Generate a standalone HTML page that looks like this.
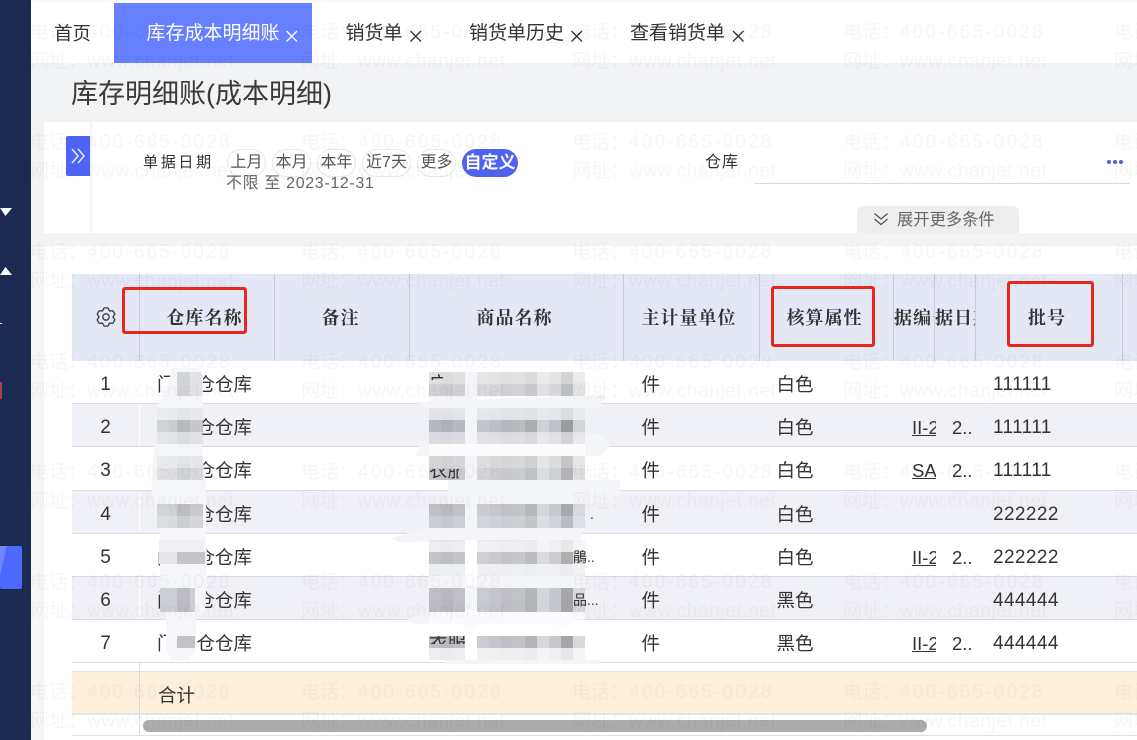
<!DOCTYPE html>
<html lang="zh-CN">
<head>
<meta charset="utf-8">
<title>库存明细账</title>
<style>
html,body{margin:0;padding:0;width:1137px;height:740px;overflow:hidden;background:#fff}
body{position:relative;font-family:"Liberation Sans","Noto Sans CJK SC",sans-serif;color:#333}
div,span,a{position:absolute;white-space:nowrap;display:block}
.tab{top:20px;font-size:19px;line-height:28px;color:#333}
.chip{top:149px;height:26px;line-height:25px;border:1px solid #dfeced;border-radius:14px;font-size:16px;color:#555;text-align:center;box-sizing:content-box}
.h{top:304px;font-family:"Liberation Serif","Noto Serif CJK SC",serif;font-weight:700;font-size:18px;line-height:28px;letter-spacing:1px;color:#333}
.vl{top:274px;height:87px;width:1px;background:#c9ccd6}
.rb{left:72px;width:1065px;height:1px;background:#d9dbe1}
.st{left:72px;width:1065px;height:43px;background:#f0f1f7}
.t{font-size:18.5px;line-height:26px;color:#333;margin-top:1px}
.n{left:95px;width:21px;text-align:center;font-size:19px;line-height:26px;color:#333;margin-top:1px}
.b{left:993px;font-size:19px;line-height:26px;letter-spacing:.4px;color:#333;margin-top:1px}
.l{left:912px;width:24px;overflow:hidden;font-size:18.5px;line-height:26px;color:#333;text-decoration:underline;margin-top:1px}
.d{left:952px;font-size:18.5px;line-height:26px;color:#333;margin-top:1px}
.rbox{border:3px solid #e6281e;border-radius:3px;box-sizing:border-box}
.clip{overflow:hidden}
</style>
</head>
<body>
<!-- page background -->
<div style="left:0;top:0;width:1137px;height:3px;background:#f8f9fc"></div>
<div style="left:31px;top:63px;width:1106px;height:183px;background:#f2f3f5"></div>
<div style="left:31px;top:246px;width:13px;height:494px;background:#f5f6f8"></div>
<div style="left:44px;top:122px;width:1093px;height:111px;background:#fff"></div>
<div style="left:90px;top:122px;width:2px;height:111px;background:#f2f3f5"></div>

<!-- tabs -->
<div style="left:114px;top:3px;width:198px;height:60px;background:#6680ff"></div>
<div class="tab" style="left:54px;font-size:18.5px">首页</div>
<div class="tab" style="left:146.500px;color:#fff">库存成本明细账</div>
<div class="tab" style="left:345.500px">销货单</div>
<div class="tab" style="left:469px">销货单历史</div>
<div class="tab" style="left:630px">查看销货单</div>
<svg style="position:absolute;left:0;top:0" width="760" height="60" viewBox="0 0 760 60" fill="none" stroke-width="1.300">
<path d="M286.500 31l10.500 10.500M297 31L286.500 41.500" stroke="#fff"/>
<path d="M410.500 31l10.500 10.500M421 31L410.500 41.500" stroke="#333"/>
<path d="M571.500 31l10.500 10.500M582 31L571.500 41.500" stroke="#333"/>
<path d="M733 31l10.500 10.500M743.500 31L733 41.500" stroke="#333"/>
</svg>

<div style="left:71px;top:75px;font-size:27px;line-height:38px;color:#3a3a3a">库存明细账(成本明细)</div>

<!-- filter -->
<div style="left:66px;top:136px;width:24px;height:40px;background:#4f63f5;border-radius:2px 0 0 2px"></div>
<svg style="position:absolute;left:70px;top:146px" width="18" height="20" viewBox="0 0 18 20" fill="none" stroke="#e6eaff" stroke-width="1.600"><path d="M2 3l6 7-6 7M8 3l6 7-6 7"/></svg>
<div style="left:143px;top:151px;font-size:15px;line-height:24px;letter-spacing:2.700px;color:#333">单据日期</div>
<div class="chip" style="left:227px;width:37px">上月</div>
<div class="chip" style="left:272px;width:37px">本月</div>
<div class="chip" style="left:317px;width:37px">本年</div>
<div class="chip" style="left:362px;width:47px">近7天</div>
<div class="chip" style="left:417px;width:37px">更多</div>
<div class="chip" style="left:462px;width:56px;border:0;height:28px;line-height:27px;background:#4f63f0;color:#fff;font-weight:700;font-size:17px">自定义</div>
<div style="left:226px;top:172px;font-size:16px;line-height:23px;letter-spacing:.650px;color:#666">不限 至 2023-12-31</div>
<div style="left:705px;top:151px;font-size:16px;line-height:24px;letter-spacing:1px;color:#333">仓库</div>
<div style="left:754px;top:183px;width:376px;height:1px;background:#d8d8dc"></div>
<div style="left:1107px;top:160px;width:4px;height:4px;border-radius:2px;background:#5060e0"></div>
<div style="left:1113px;top:160px;width:4px;height:4px;border-radius:2px;background:#5060e0"></div>
<div style="left:1119px;top:160px;width:4px;height:4px;border-radius:2px;background:#5060e0"></div>
<div style="left:857px;top:206px;width:162px;height:27px;background:#eeeeee;border-radius:6px 6px 0 0"></div>
<svg style="position:absolute;left:873px;top:211px" width="16" height="16" viewBox="0 0 16 16" fill="none" stroke="#555" stroke-width="1.300"><path d="M1.500 2.500L8 8l6.500-5.500M1.500 8L8 13.500 14.500 8"/></svg>
<div style="left:897px;top:208px;font-size:16.300px;line-height:24px;color:#666">展开更多条件</div>

<!-- table header -->
<div style="left:72px;top:274px;width:1065px;height:87px;background:#e4e8f4"></div>
<div class="vl" style="left:139px"></div>
<div class="vl" style="left:274px"></div>
<div class="vl" style="left:409px"></div>
<div class="vl" style="left:623px"></div>
<div class="vl" style="left:759px"></div>
<div class="vl" style="left:893px"></div>
<div class="vl" style="left:934px"></div>
<div class="vl" style="left:975px"></div>
<div class="vl" style="left:1122px"></div>
<svg style="position:absolute;left:97px;top:307px;overflow:visible" width="18" height="20" viewBox="0 0 18 20" fill="none" stroke="#3c3c3c" stroke-width="1.300" stroke-linejoin="round"><path d="M7.070.9H10.930L12.500 3.940 15.910 3.780 17.840 7.130 16 10 17.840 12.870 15.910 16.220 12.500 16.060 10.930 19.100H7.070L5.500 16.060 2.090 16.220 .16 12.870 2 10 .16 7.130 2.090 3.780 5.500 3.940Z"/><circle cx="9" cy="10" r="3.200"/></svg>
<div class="h" style="left:166.500px">仓库名称</div>
<div class="h" style="left:321.500px">备注</div>
<div class="h" style="left:476.500px">商品名称</div>
<div class="h" style="left:641.500px">主计量单位</div>
<div class="h" style="left:786.500px">核算属性</div>
<div class="h clip" style="left:893px;width:41px;height:28px"><span style="left:-18px;top:0">单据编号</span></div>
<div class="h clip" style="left:935px;width:40px;height:28px"><span style="left:-19px;top:0">单据日期</span></div>
<div class="h" style="left:1028px">批号</div>

<!-- rows -->
<div class="st" style="top:404px"></div>
<div class="st" style="top:490px"></div>
<div class="st" style="top:577px"></div>
<div class="rb" style="top:403px"></div>
<div class="rb" style="top:446px"></div>
<div class="rb" style="top:490px"></div>
<div class="rb" style="top:533px"></div>
<div class="rb" style="top:576px"></div>
<div class="rb" style="top:619px"></div>
<div class="rb" style="top:662px"></div>
<div style="left:139px;top:404px;width:1px;height:42px;background:#fff"></div>
<div style="left:139px;top:491px;width:1px;height:42px;background:#fff"></div>
<div style="left:139px;top:577px;width:1px;height:42px;background:#fff"></div>

<div class="n" style="top:371px">1</div><div class="n" style="top:414px">2</div><div class="n" style="top:457px">3</div><div class="n" style="top:501px">4</div><div class="n" style="top:544px">5</div><div class="n" style="top:587px">6</div><div class="n" style="top:630px">7</div>

<div class="t" style="left:157px;top:371px">门</div><div class="t" style="left:178px;top:371px">仓仓仓库</div>
<div class="t" style="left:178px;top:414px">仓仓仓库</div>
<div class="t" style="left:178px;top:457px">仓仓仓库</div>
<div class="t" style="left:178px;top:501px">仓仓仓库</div>
<div class="t" style="left:157px;top:544px">门</div><div class="t" style="left:178px;top:544px">仓仓仓库</div>
<div class="t" style="left:157px;top:587px">门</div><div class="t" style="left:196.500px;top:587px">仓仓库</div>
<div class="t" style="left:157px;top:630px">门</div><div class="t" style="left:196.500px;top:630px">仓仓库</div>

<!-- unit / attr -->
<div class="t" style="left:641.500px;top:371px">件</div><div class="t" style="left:641.500px;top:414px">件</div><div class="t" style="left:641.500px;top:457px">件</div><div class="t" style="left:641.500px;top:501px">件</div><div class="t" style="left:641.500px;top:544px">件</div><div class="t" style="left:641.500px;top:587px">件</div><div class="t" style="left:641.500px;top:630px">件</div>
<div class="t" style="left:776.500px;top:371px">白色</div><div class="t" style="left:776.500px;top:414px">白色</div><div class="t" style="left:776.500px;top:457px">白色</div><div class="t" style="left:776.500px;top:501px">白色</div><div class="t" style="left:776.500px;top:544px">白色</div><div class="t" style="left:776.500px;top:587px">黑色</div><div class="t" style="left:776.500px;top:630px">黑色</div>

<div class="l" style="top:414px">II-2023</div><div class="l" style="top:457px">SA-2023</div><div class="l" style="top:544px">II-2023</div><div class="l" style="top:630px">II-2023</div>
<div class="d" style="top:414px">2..</div><div class="d" style="top:457px">2..</div><div class="d" style="top:544px">2..</div><div class="d" style="top:630px">2..</div>

<div class="b" style="top:371px">111111</div><div class="b" style="top:414px">111111</div><div class="b" style="top:457px">111111</div><div class="b" style="top:501px">222222</div><div class="b" style="top:544px">222222</div><div class="b" style="top:587px">444444</div><div class="b" style="top:630px">444444</div>

<!-- mosaics -->
<svg style="position:absolute;left:0;top:0" width="1137" height="740" viewBox="0 0 1137 740">
<defs>
<g id="p">
<rect x="429" width="12" height="12" fill="#b4b5ba"/><rect x="441" width="12" height="12" fill="#adaeb3"/><rect x="453" width="12" height="12" fill="#b6b7bc"/>
<rect x="477" width="12" height="12" fill="#c3c4c9"/><rect x="489" width="12" height="12" fill="#bcbdc2"/><rect x="501" width="12" height="12" fill="#b5b6bb"/><rect x="513" width="12" height="12" fill="#b8b9be"/><rect x="525" width="12" height="12" fill="#a9aaae"/><rect x="537" width="12" height="12" fill="#cfd0d5"/><rect x="549" width="12" height="12" fill="#bfc0c5"/><rect x="561" width="12" height="12" fill="#97989c"/><rect x="573" width="12" height="12" fill="#d3d4d8"/>
</g>
<g id="w"><rect x="157" width="12" height="12" fill="#c5c6cb"/><rect x="169" width="12" height="12" fill="#bfc0c5"/><rect x="177" width="13" height="12" fill="#a6a7ab"/><rect x="190" width="13" height="12" fill="#b7b8bd"/></g>
</defs>
<!-- smears -->
<g fill="#f4f5f9">
<polygon points="415,402 520,398 605,395 600,408 430,410"/>
<polygon points="420,442 470,439 600,434 610,446 600,456 415,456"/>
<polygon points="448,480 620,480 620,496 600,504 448,504"/>
<polygon points="392,538 425,528 585,528 580,540 398,542"/>
<polygon points="478,564 585,564 585,588 478,588"/>
<polygon points="406,620 430,612 585,612 570,625 415,624"/>
<polygon points="445,660 600,660 598,664 445,664"/>
<rect x="465" y="372" width="12" height="290"/>
<rect x="429" y="396" width="36" height="12"/>
<rect x="429" y="564" width="36" height="24"/>
</g>
<g fill="#fff">
<rect x="465" y="540" width="12" height="46"/><rect x="465" y="630" width="12" height="30"/>
<rect x="429" y="610" width="156" height="26" opacity=".6"/>
<rect x="429" y="444" width="156" height="12" opacity=".7"/>
</g>
<polygon fill="#f5f6f9" points="172,368 198,368 203,376 202,450 206,490 207,575 205,610 196,620 196,650 188,660 172,660 166,650 166,615 160,600 160,530 155,505 152,490 153,455 157,440 157,405 165,395"/>
<use href="#p" y="372" opacity=".42"/><use href="#p" y="384" opacity=".62"/>
<use href="#p" y="408" opacity=".22"/><use href="#p" y="420" opacity=".95"/><use href="#p" y="432" opacity=".35"/>
<use href="#p" y="456" opacity=".55"/><use href="#p" y="468" opacity=".72"/>
<use href="#p" y="504" opacity=".8"/><use href="#p" y="516" opacity=".6"/>
<use href="#p" y="540" opacity=".22"/><use href="#p" y="552" opacity=".78"/><use href="#p" y="564" opacity=".08"/>
<use href="#p" y="588" opacity=".82"/><use href="#p" y="600" opacity=".85"/>
<use href="#p" y="636" opacity=".85"/><use href="#p" y="648" opacity=".22"/>
<!-- warehouse mosaics -->
<rect x="177" y="372" width="13" height="24" fill="#d2d3d6"/><rect x="190" y="372" width="12" height="24" fill="#e1e2e5"/>
<use href="#w" y="408" opacity=".2"/><use href="#w" y="420" opacity=".75"/><use href="#w" y="432" opacity=".32"/>
<use href="#w" y="456" opacity=".22"/><use href="#w" y="468" opacity=".45"/>
<use href="#w" y="504" opacity=".7"/><use href="#w" y="516" opacity=".5"/>
<rect x="159" y="540" width="45" height="12" fill="#f0f0f2"/><rect x="159" y="552" width="18" height="12" fill="#e6e6e8"/><rect x="177" y="552" width="28" height="12" fill="#c6c6c9"/>
<rect x="160" y="588" width="35" height="24" fill="#cdced4"/><rect x="177" y="588" width="13" height="24" fill="#bcbdc3"/>
<rect x="177" y="636" width="18" height="12" fill="#c3c3c6"/>
</svg>

<!-- text scraps showing through the mosaic -->
<div class="clip" style="left:429px;top:374px;width:14px;height:6px"><span class="t" style="left:0;top:-4px">广</span></div>
<div class="clip" style="left:429px;top:469px;width:30px;height:11px"><span class="t" style="left:0;top:-12px">衣服</span></div>
<div class="clip" style="left:429px;top:636px;width:36px;height:8px"><span class="t" style="left:0;top:-6px">衣服</span></div>
<div style="left:573px;top:546px;font-size:14px;line-height:22px">鵑..</div>
<div style="left:573px;top:589px;font-size:14px;line-height:22px">品...</div>
<div style="left:590px;top:503px;font-size:14px;line-height:22px">.</div>

<!-- footer -->
<div style="left:72px;top:671px;width:1065px;height:44px;background:#fdf0da;border-top:1px solid #dedfe3;border-bottom:2px solid #e4e4e6;box-sizing:border-box"></div>
<div style="left:139px;top:662px;width:1px;height:73px;background:#dcdcdc"></div>
<div class="t" style="left:158px;top:682px">合计</div>
<div style="left:143px;top:720px;width:784px;height:12px;border-radius:6px;background:#acacac"></div>
<div style="left:72px;top:735px;width:1065px;height:1px;background:#dfdfe2"></div>

<!-- red annotation boxes -->
<div class="rbox" style="left:122px;top:287px;width:125px;height:47px"></div>
<div class="rbox" style="left:771px;top:286px;width:104px;height:61px"></div>
<div class="rbox" style="left:1007px;top:281px;width:87px;height:66px"></div>

<!-- watermark -->
<svg style="position:absolute;left:0;top:0;pointer-events:none" width="1137" height="740" viewBox="0 0 1137 740">
<defs>
<pattern id="wm" x="30" y="0" width="271" height="110" patternUnits="userSpaceOnUse">
<g font-family="'Liberation Sans','Noto Sans CJK SC',sans-serif" font-size="19" fill="#000" fill-opacity=".035">
<text x="0" y="38">电话：<tspan letter-spacing="2.200">400-665-0028</tspan></text>
<text x="0" y="67">网址：<tspan letter-spacing=".6">www.chanjet.net</tspan></text>
</g>
</pattern>
</defs>
<rect width="1137" height="740" fill="url(#wm)"/>
</svg>

<!-- sidebar -->
<div style="left:0;top:0;width:31px;height:740px;background:#1a2a50"></div>
<svg style="position:absolute;left:0;top:0" width="31" height="740" viewBox="0 0 31 740">
<path d="M0 208H12L5.500 216Z" fill="#fff"/>
<path d="M0 275H12L5.500 267Z" fill="#fff"/>
<rect x="0" y="323" width="2" height="1" fill="#fff"/>
<rect x="0" y="382" width="2" height="17" fill="#b03a50"/>
<rect x="0" y="546" width="22" height="43" rx="2" fill="#4c68ff"/>
<path d="M0 546H7L3 562 0 575Z" fill="#6f86ff"/>
</svg>
</body>
</html>
